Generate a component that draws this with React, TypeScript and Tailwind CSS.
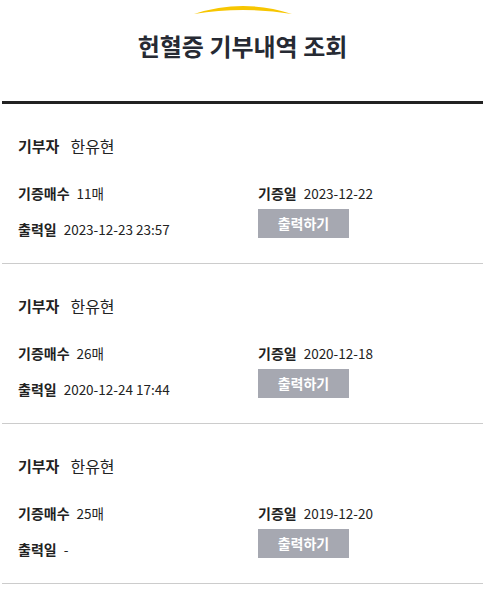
import React from 'react';

interface Donation {
  donor: string;
  count: string;
  donatedAt: string;
  printedAt: string;
}

const donations: Donation[] = [
  { donor: '한유현', count: '11매', donatedAt: '2023-12-22', printedAt: '2023-12-23 23:57' },
  { donor: '한유현', count: '26매', donatedAt: '2020-12-18', printedAt: '2020-12-24 17:44' },
  { donor: '한유현', count: '25매', donatedAt: '2019-12-20', printedAt: '-' },
];

export default function App() {
  return (
    <div
      className="min-h-screen bg-white text-[#222]"
      style={{ fontFamily: '"Noto Sans CJK KR", "Noto Sans", sans-serif' }}
    >
      {/* Header */}
      <header className="h-[101px] flex flex-col items-center pt-[3px]">
        <svg width="98" height="12" viewBox="0 0 100 12" preserveAspectRatio="none" className="block">
          <path d="M0,11 Q50,-5 100,11 Q50,3 0,11 Z" fill="#f7c600" />
        </svg>
        <h1 className="mt-[15px] text-[24px] leading-[32px] font-bold text-[#262a33]">
          헌혈증 기부내역 조회
        </h1>
      </header>
      <div className="mx-[2px] h-[3px] bg-[#222]" />

      <main>
        {donations.map((d, i) => (
          <div key={i}>
            <div className="pl-[18px] pt-[31px] pb-[24px]">
              <div className="flex items-center h-[22px]">
                <span className="text-[15px] font-bold">기부자</span>
                <span className="ml-[11px] text-[16px]">{d.donor}</span>
              </div>
              <div className="mt-[26px] flex">
                <div className="w-[240px]">
                  <div className="flex items-center h-[20px]">
                    <span className="text-[14px] font-bold">기증매수</span>
                    <span className="ml-[7px] text-[13.5px]">{d.count}</span>
                  </div>
                  <div className="mt-[16px] flex items-center h-[20px]">
                    <span className="text-[14px] font-bold">출력일</span>
                    <span className="ml-[7px] text-[13.5px]">{d.printedAt}</span>
                  </div>
                </div>
                <div>
                  <div className="flex items-center h-[20px]">
                    <span className="text-[14px] font-bold">기증일</span>
                    <span className="ml-[7px] text-[13.5px]">{d.donatedAt}</span>
                  </div>
                  <button className="mt-[6px] w-[91px] h-[29px] bg-[#a6a8b1] text-white text-[14px] font-bold flex items-center justify-center">
                    출력하기
                  </button>
                </div>
              </div>
            </div>
            <div className="mx-[2px] h-px bg-[#cccccc]" />
          </div>
        ))}
      </main>
    </div>
  );
}
